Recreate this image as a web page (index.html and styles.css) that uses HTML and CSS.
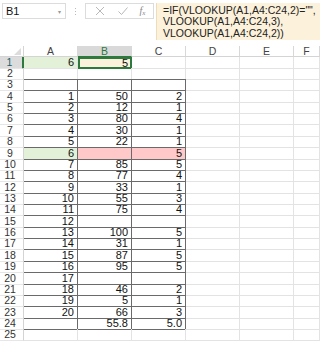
FILE: index.html
```html
<!DOCTYPE html>
<html>
<head>
<meta charset="utf-8">
<link rel="stylesheet" href="styles.css">
</head>
<body>
<div class="toolbar">
  <div class="namebox"><span class="ref">B1</span><span class="drop">▾</span></div>
  <div class="dots"><i></i><i></i><i></i></div>
  <div class="fbtns">
    <svg class="ico" width="12" height="12" viewBox="0 0 12 12"><path d="M2 2 L10 10 M10 2 L2 10" stroke="#b8b8b8" stroke-width="1" fill="none"/></svg>
    <svg class="ico" width="12" height="12" viewBox="0 0 12 12"><path d="M1.5 6.5 L4.5 9.5 L10.5 2.5" stroke="#b8b8b8" stroke-width="1" fill="none"/></svg>
    <span class="fx">f<sub>x</sub></span>
  </div>
  <div class="formula">=IF(VLOOKUP(A1,A4:C24,2)="",<br>VLOOKUP(A1,A4:C24,3),<br>VLOOKUP(A1,A4:C24,2))</div>
</div>
<div class="sheet">
  <div class="row hdr"><div class="rh corner"><span class="tri"></span></div><div class="ch">A</div><div class="ch sel">B</div><div class="ch">C</div><div class="ch">D</div><div class="ch">E</div><div class="ch">F</div></div>
  <div class="row"><div class="rh rsel">1</div><div class="c green">6</div><div class="c cur">5</div><div class="c"></div><div class="c"></div><div class="c"></div><div class="c"></div></div>
  <div class="row"><div class="rh">2</div><div class="c tb"></div><div class="c tb"></div><div class="c tb"></div><div class="c"></div><div class="c"></div><div class="c"></div></div>
  <div class="row"><div class="rh">3</div><div class="c t"></div><div class="c t"></div><div class="c t"></div><div class="c"></div><div class="c"></div><div class="c"></div></div>
  <div class="row"><div class="rh">4</div><div class="c t">1</div><div class="c t">50</div><div class="c t">2</div><div class="c"></div><div class="c"></div><div class="c"></div></div>
  <div class="row"><div class="rh">5</div><div class="c t">2</div><div class="c t">12</div><div class="c t">1</div><div class="c"></div><div class="c"></div><div class="c"></div></div>
  <div class="row"><div class="rh">6</div><div class="c t">3</div><div class="c t">80</div><div class="c t">4</div><div class="c"></div><div class="c"></div><div class="c"></div></div>
  <div class="row"><div class="rh">7</div><div class="c t">4</div><div class="c t">30</div><div class="c t">1</div><div class="c"></div><div class="c"></div><div class="c"></div></div>
  <div class="row"><div class="rh">8</div><div class="c t">5</div><div class="c t">22</div><div class="c t">1</div><div class="c"></div><div class="c"></div><div class="c"></div></div>
  <div class="row"><div class="rh">9</div><div class="c t green">6</div><div class="c t pink"></div><div class="c t pink">5</div><div class="c"></div><div class="c"></div><div class="c"></div></div>
  <div class="row"><div class="rh">10</div><div class="c t">7</div><div class="c t">85</div><div class="c t">5</div><div class="c"></div><div class="c"></div><div class="c"></div></div>
  <div class="row"><div class="rh">11</div><div class="c t">8</div><div class="c t">77</div><div class="c t">4</div><div class="c"></div><div class="c"></div><div class="c"></div></div>
  <div class="row"><div class="rh">12</div><div class="c t">9</div><div class="c t">33</div><div class="c t">1</div><div class="c"></div><div class="c"></div><div class="c"></div></div>
  <div class="row"><div class="rh">13</div><div class="c t">10</div><div class="c t">55</div><div class="c t">3</div><div class="c"></div><div class="c"></div><div class="c"></div></div>
  <div class="row"><div class="rh">14</div><div class="c t">11</div><div class="c t">75</div><div class="c t">4</div><div class="c"></div><div class="c"></div><div class="c"></div></div>
  <div class="row"><div class="rh">15</div><div class="c t">12</div><div class="c t"></div><div class="c t"></div><div class="c"></div><div class="c"></div><div class="c"></div></div>
  <div class="row"><div class="rh">16</div><div class="c t">13</div><div class="c t">100</div><div class="c t">5</div><div class="c"></div><div class="c"></div><div class="c"></div></div>
  <div class="row"><div class="rh">17</div><div class="c t">14</div><div class="c t">31</div><div class="c t">1</div><div class="c"></div><div class="c"></div><div class="c"></div></div>
  <div class="row"><div class="rh">18</div><div class="c t">15</div><div class="c t">87</div><div class="c t">5</div><div class="c"></div><div class="c"></div><div class="c"></div></div>
  <div class="row"><div class="rh">19</div><div class="c t">16</div><div class="c t">95</div><div class="c t">5</div><div class="c"></div><div class="c"></div><div class="c"></div></div>
  <div class="row"><div class="rh">20</div><div class="c t">17</div><div class="c t"></div><div class="c t"></div><div class="c"></div><div class="c"></div><div class="c"></div></div>
  <div class="row"><div class="rh">21</div><div class="c t">18</div><div class="c t">46</div><div class="c t">2</div><div class="c"></div><div class="c"></div><div class="c"></div></div>
  <div class="row"><div class="rh">22</div><div class="c t">19</div><div class="c t">5</div><div class="c t">1</div><div class="c"></div><div class="c"></div><div class="c"></div></div>
  <div class="row"><div class="rh">23</div><div class="c t">20</div><div class="c t">66</div><div class="c t">3</div><div class="c"></div><div class="c"></div><div class="c"></div></div>
  <div class="row"><div class="rh">24</div><div class="c t"></div><div class="c t">55.8</div><div class="c t">5.0</div><div class="c"></div><div class="c"></div><div class="c"></div></div>
  <div class="row"><div class="rh">25</div><div class="c"></div><div class="c"></div><div class="c"></div><div class="c"></div><div class="c"></div><div class="c"></div></div>
</div>
</body>
</html>
```

FILE: styles.css
```css
* { box-sizing: border-box; }
html, body { margin: 0; padding: 0; background: #fff; }
body {
  width: 320px;
  height: 341px;
  overflow: hidden;
  font-family: "Liberation Sans", Arial, sans-serif;
  color: #111;
}
.toolbar {
  height: 46px;
  display: flex;
  align-items: flex-start;
  padding-top: 3px;
  padding-left: 2px;
}
.namebox {
  width: 64px;
  height: 16px;
  border: 1px solid #dcdcdc;
  display: flex;
  align-items: center;
  justify-content: space-between;
  padding: 0 4px 0 3px;
  font-size: 11px;
}
.namebox .drop { font-size: 6px; color: #999; }
.dots {
  width: 19px;
  height: 16px;
  display: flex;
  flex-direction: column;
  align-items: center;
  justify-content: center;
  gap: 2px;
}
.dots i { display: block; width: 1px; height: 1px; background: #bbb; }
.fbtns {
  width: 69px;
  height: 16px;
  border: 1px solid #dcdcdc;
  display: flex;
  align-items: center;
  justify-content: space-around;
  padding: 0 2px;
}
.fx {
  font-family: "Liberation Serif", "Times New Roman", serif;
  font-style: italic;
  font-size: 10px;
  color: #888;
}
.fx sub { font-size: 7px; vertical-align: -1px; }
.formula {
  flex: 1;
  margin-left: 2px;
  height: 37px;
  background: #fcf1da;
  border-left: 1px solid #efdcb9;
  padding: 2px 0 0 6px;
  font-size: 10.5px;
  line-height: 11.3px;
  color: #222;
  white-space: nowrap;
  overflow: hidden;
}
.sheet { display: flex; flex-direction: column; }
.row {
  display: grid;
  grid-template-columns: 24px 54px 54px 54px 54px 54px 26px;
  height: 11.37px;
}
.row.hdr { height: 10.7px; }
.rh {
  border-right: 1px solid #d4d4d4;
  border-bottom: 1px solid #e6e6e6;
  font-size: 10.5px;
  line-height: 11px;
  text-align: center;
  color: #333;
  padding-right: 3px;
}
.corner { position: relative; border-bottom: 1px solid #d4d4d4; }
.tri {
  position: absolute;
  right: 2px;
  bottom: 1px;
  width: 0;
  height: 0;
  border-left: 7px solid transparent;
  border-bottom: 7px solid #dcdcdc;
}
.ch {
  border-right: 1px solid #d8d8d8;
  border-bottom: 1px solid #d4d4d4;
  font-size: 10.5px;
  line-height: 10px;
  text-align: center;
  color: #444;
}
.ch.sel {
  background: #d9d9d9;
  color: #2e7a3e;
  border-bottom: 1px solid #2e7a3e;
}
.rh.rsel {
  background: #dcdcdc;
  color: #1f5f6b;
  border-right: 2px solid #2e7a3e;
}
.c {
  border-right: 1px solid #e3e3e3;
  border-bottom: 1px solid #e3e3e3;
  font-size: 11px;
  line-height: 11px;
  text-align: right;
  padding-right: 3px;
  overflow: hidden;
  white-space: nowrap;
}
.c.tb { border-bottom: 1px solid #6a6a6a; }
.c.t { border-bottom: 1px solid #6a6a6a; border-right: 1px solid #6a6a6a; }
.c.green { background: #e2f1d8; }
.c.pink { background: #ffc9c9; }
.c.cur {
  background: #fcf1da;
  border: 2px solid #2e7a3e;
  line-height: 8px;
  padding-right: 2px;
}
```
